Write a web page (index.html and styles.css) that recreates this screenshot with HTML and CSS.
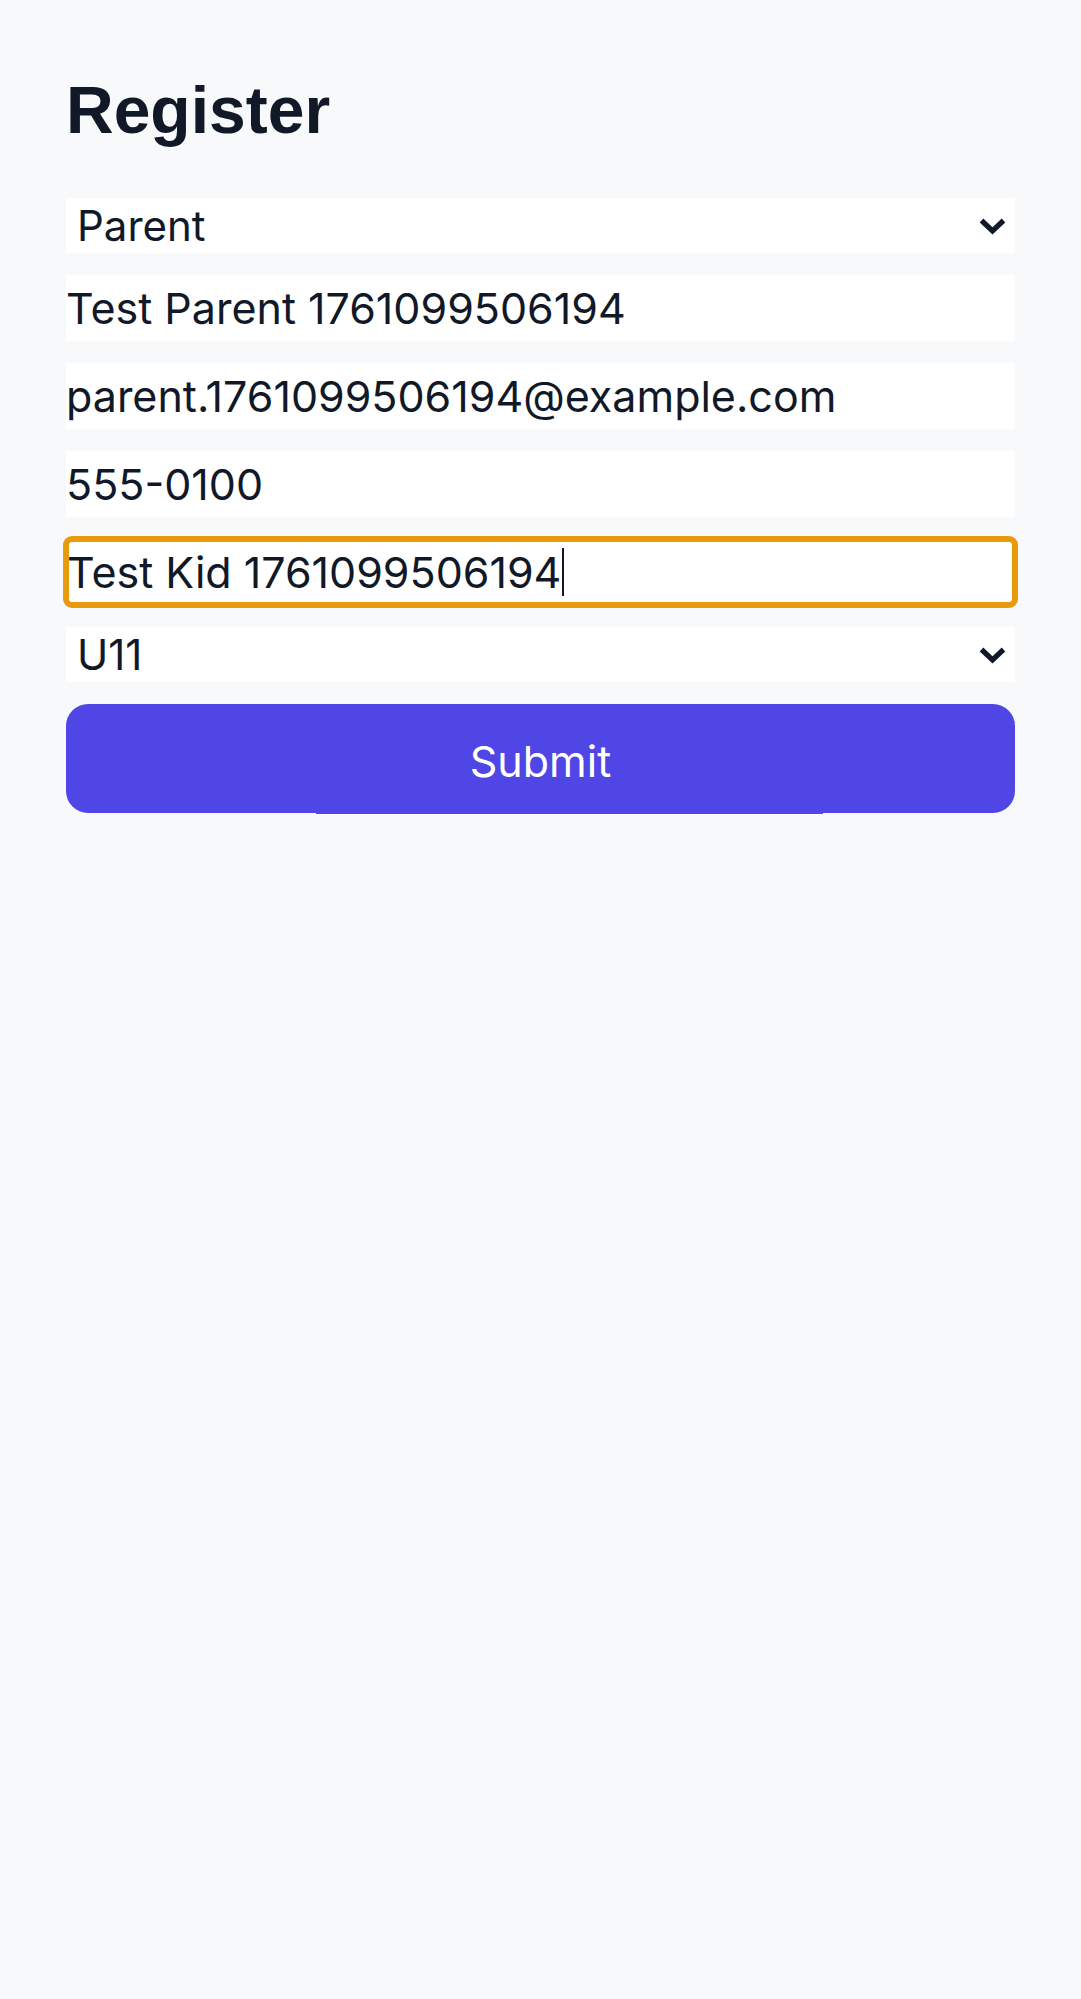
FILE: index.html
```html
<!DOCTYPE html>
<html lang="en">
<head>
<meta charset="utf-8">
<title>Register</title>
<link rel="stylesheet" href="styles.css">
</head>
<body>
<main class="page">
  <h1 class="title">Register</h1>
  <form class="form">
    <div class="select">
      <span class="select__value">Parent</span>
      <svg class="chevron" width="27" height="19" viewBox="0 0 27 19"><path d="M2.5 3.5 L13.5 14 L24.5 3.5" fill="none" stroke="#111827" stroke-width="5.2"/></svg>
    </div>
    <input class="field" type="text" value="Test Parent 1761099506194">
    <input class="field" type="email" value="parent.1761099506194@example.com">
    <input class="field" type="tel" value="555-0100">
    <div class="field field--focus"><span>Test Kid 1761099506194</span><span class="caret"></span></div>
    <div class="select">
      <span class="select__value">U11</span>
      <svg class="chevron" width="27" height="19" viewBox="0 0 27 19"><path d="M2.5 3.5 L13.5 14 L24.5 3.5" fill="none" stroke="#111827" stroke-width="5.2"/></svg>
    </div>
    <button class="submit" type="button">Submit</button>
  </form>
</main>
</body>
</html>
```
FILE: styles.css
```css
html, body {
  margin: 0;
  padding: 0;
  background: #f8f9fb;
}

.page {
  padding: 66px 66px;
  color: #111827;
  font-family: Inter, "Noto Sans", sans-serif;
}

.title {
  margin: 0 0 44px;
  font-family: "Liberation Sans", Arial, sans-serif;
  font-weight: 700;
  font-size: 66px;
  line-height: 88px;
  color: #111827;
}

.form {
  display: flex;
  flex-direction: column;
  gap: 22px;
}

.select {
  height: 55px;
  background: #ffffff;
  display: flex;
  align-items: center;
  justify-content: space-between;
  padding: 0 9px 0 11px;
  font-size: 42px;
  color: #111827;
}

.select__value {
  line-height: 55px;
}

.chevron {
  display: block;
  margin-top: 2px;
}

.field {
  box-sizing: border-box;
  display: flex;
  align-items: center;
  width: 100%;
  height: 66px;
  margin: 0;
  padding: 0;
  border: 0;
  background: #ffffff;
  font-family: Inter, "Noto Sans", sans-serif;
  font-size: 43px;
  color: #111827;
  outline: none;
}

.field--focus {
  padding-left: 1px;
  border-radius: 6px;
  outline: 6px solid #e8990c;
  outline-offset: -3px;
}

.caret {
  display: inline-block;
  width: 2px;
  height: 48px;
  margin-left: 1px;
  background: #111827;
}

.submit {
  position: relative;
  height: 109px;
  border: 0;
  border-radius: 22px;
  background: #4f46e5;
  color: #ffffff;
  font-family: Inter, "Noto Sans", sans-serif;
  font-size: 43px;
  font-weight: 400;
  padding: 5px 0 0;
}

.submit::after {
  content: "";
  position: absolute;
  left: 250px;
  width: 507px;
  bottom: -1px;
  height: 1px;
  background: #4f46e5;
}
```
